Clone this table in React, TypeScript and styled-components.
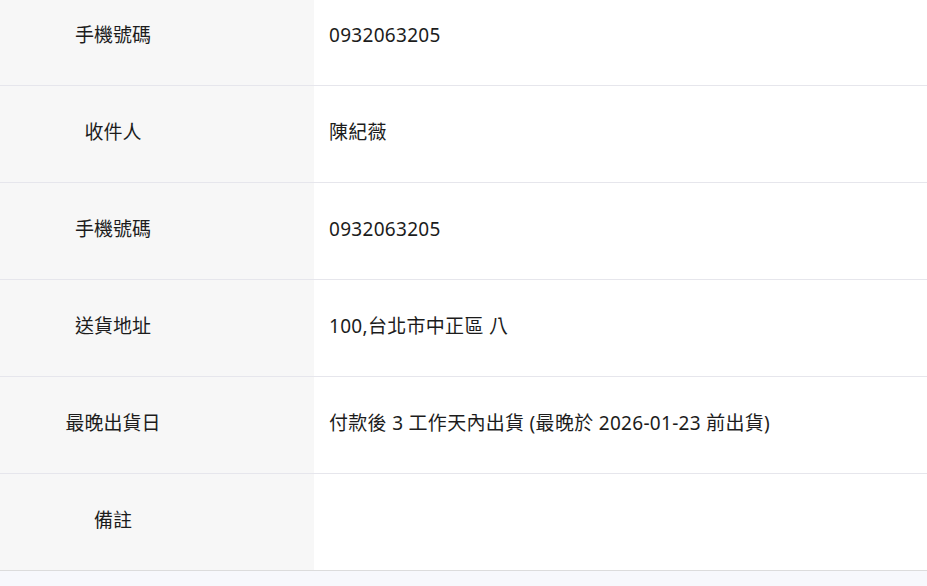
import React from "react";
import styled, { createGlobalStyle } from "styled-components";

interface InfoRow {
  label: string;
  value: string;
}

const rows: InfoRow[] = [
  { label: "手機號碼", value: "0932063205" },
  { label: "收件人", value: "陳紀薇" },
  { label: "手機號碼", value: "0932063205" },
  { label: "送貨地址", value: "100,台北市中正區 八" },
  { label: "最晚出貨日", value: "付款後 3 工作天內出貨 (最晚於 2026-01-23 前出貨)" },
  { label: "備註", value: "" },
];

const GlobalStyle = createGlobalStyle`
  html, body {
    margin: 0;
    padding: 0;
    background: #f7f8fc;
    overflow: hidden;
  }
  body {
    font-family: "Noto Sans", "Noto Sans CJK TC", sans-serif;
    color: #1c1c1c;
  }
`;

const App: React.FC = () => {
  return (
    <>
      <GlobalStyle />
      <Page>
        <InfoTable>
          {rows.map((row, i) => (
            <Row key={i} last={i === rows.length - 1}>
              <LabelCell>{row.label}</LabelCell>
              <ValueCell>{row.value}</ValueCell>
            </Row>
          ))}
        </InfoTable>
      </Page>
    </>
  );
};

const Page = styled.div`
  width: 100%;
  height: 586px;
  overflow: hidden;
`;

const InfoTable = styled.div`
  display: flex;
  flex-direction: column;
  margin-top: -11px;
  background: #ffffff;
`;

const Row = styled.div<{ last: boolean }>`
  display: grid;
  grid-template-columns: 314px 1fr;
  height: 96px;
  border-bottom: 1px solid ${(props) => (props.last ? "#dcdcdc" : "#e6e6ec")};
`;

const LabelCell = styled.div`
  display: flex;
  align-items: center;
  justify-content: center;
  padding-right: 88px;
  padding-bottom: 3px;
  background: #f7f7f7;
  font-size: 19px;
  line-height: 1;
`;

const ValueCell = styled.div`
  display: flex;
  align-items: center;
  padding-left: 15px;
  padding-bottom: 3px;
  background: #ffffff;
  font-size: 19px;
  line-height: 1;
  letter-spacing: 0.3px;
`;

export default App;
